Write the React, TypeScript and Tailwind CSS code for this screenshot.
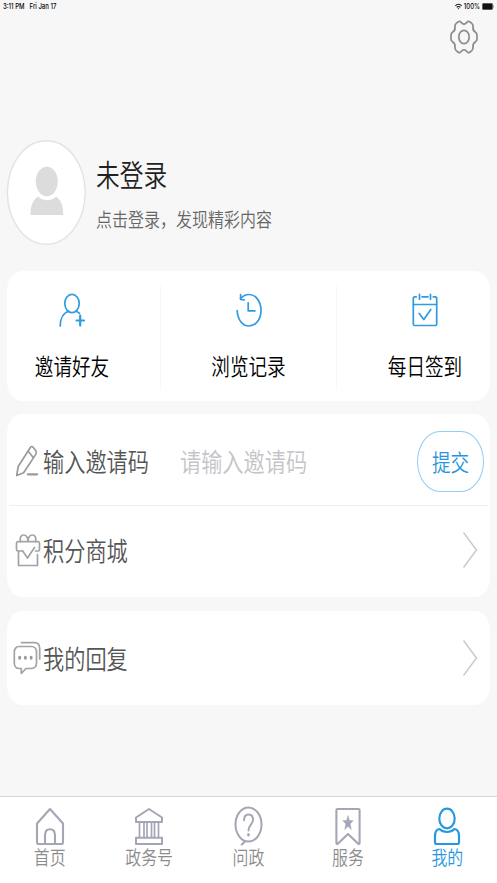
import type { ReactNode } from "react";

const tabs = [
  { id: "home", label: "首页", icon: HomeIcon, active: false },
  { id: "gov", label: "政务号", icon: GovIcon, active: false },
  { id: "ask", label: "问政", icon: AskIcon, active: false },
  { id: "service", label: "服务", icon: ServiceIcon, active: false },
  { id: "mine", label: "我的", icon: MineIcon, active: true },
];

const shortcuts = [
  { id: "invite", label: "邀请好友", icon: InviteIcon },
  { id: "history", label: "浏览记录", icon: HistoryIcon },
  { id: "checkin", label: "每日签到", icon: CheckinIcon },
];

// Tall, narrow lettering used across the whole screen
function Tall({ className = "", children }: { className?: string; children: ReactNode }) {
  return (
    <span className={`inline-block scale-y-[1.24] whitespace-nowrap leading-none ${className}`}>{children}</span>
  );
}

function GearIcon() {
  return (
    <svg className="w-[28px] h-[34px]" viewBox="0 0 28 34" fill="none" stroke="#8c8c8c" strokeWidth="1.7" strokeLinejoin="round">
      <path d="M8.3 1.800 C9.500 0.900 10.400 1.400 11.200 2.600 C12.700 4.600 15.300 4.600 16.800 2.600 C17.600 1.400 18.500 0.900 19.700 1.800 L21.800 3.400 C23 4.400 23.200 5.500 23 7 C22.700 9.500 23.300 10.800 25.200 12 C26.600 12.900 27 13.800 27 15 V19 C27 20.200 26.600 21.100 25.200 22 C23.300 23.200 22.700 24.500 23 27 C23.200 28.500 23 29.600 21.800 30.600 L19.700 32.200 C18.500 33.100 17.600 32.600 16.800 31.400 C15.300 29.400 12.700 29.400 11.200 31.400 C10.400 32.600 9.500 33.100 8.300 32.200 L6.200 30.600 C5 29.600 4.800 28.500 5 27 C5.300 24.500 4.700 23.200 2.800 22 C1.400 21.100 1 20.200 1 19 V15 C1 13.800 1.400 12.900 2.800 12 C4.700 10.800 5.300 9.500 5 7 C4.800 5.500 5 4.400 6.200 3.400 Z" />
      <ellipse cx="14" cy="17" rx="5.2" ry="6.7" />
    </svg>
  );
}

function InviteIcon() {
  return (
    <svg className="w-[28px] h-[36px]" viewBox="0 0 28 36" fill="none" stroke="#2f9be0" strokeWidth="1.7" strokeLinecap="round">
      <ellipse cx="14" cy="11.5" rx="7.2" ry="9.2" />
      <path d="M2.2 34 C2.2 26.5 5.5 20.8 10.8 19.2" />
      <path d="M17.8 19.2 C19.4 19.7 20.6 20.4 21.5 21.4" />
      <path d="M22.200 23.500 V33.500 M18.500 28.500 H26" strokeWidth="2.200" />
    </svg>
  );
}

function HistoryIcon() {
  return (
    <svg className="w-[28px] h-[36px]" viewBox="0 0 28 36" fill="none" stroke="#2f9be0" strokeWidth="1.700" strokeLinecap="round" strokeLinejoin="round">
      <path d="M2.200 18.500 C2.400 27 7.200 34 14 34 C20.800 34 26 27.200 26 18.500 C26 9.500 20.800 2.500 14 2.500 C10.500 2.500 7.800 4 5.400 6.700" />
      <path d="M5.600 2.700 V7.300 L9.300 8" />
      <path d="M13.200 10.800 V18.800 H20" />
    </svg>
  );
}

function CheckinIcon() {
  return (
    <svg className="w-[28px] h-[36px]" viewBox="0 0 28 36" fill="none" stroke="#2f9be0" strokeWidth="1.700" strokeLinecap="round" strokeLinejoin="round">
      <path d="M5.300 4.800 H3.600 C2.800 4.800 2.300 5.500 2.300 6.400 V31.800 C2.300 32.900 2.800 33.500 3.600 33.500 H24.400 C25.200 33.500 25.700 32.900 25.700 31.800 V6.400 C25.700 5.500 25.200 4.800 24.400 4.800 H22.300" />
      <path d="M11 4.800 H17 M8.500 2.300 V7.200 M19.500 2.300 V7.200 M2.500 12.500 H25.500" />
      <path d="M8.200 21.500 L12.800 27.500 L19.800 17.500" />
    </svg>
  );
}

function PencilIcon() {
  return (
    <svg className="w-[24px] h-[32px]" viewBox="0 0 24 32" fill="none" stroke="#9a9a9a" strokeWidth="1.700" strokeLinecap="round" strokeLinejoin="round">
      <path d="M1.700 30.500 L3.200 21.500 L15.500 2.300 C16.300 1.200 17.300 1.200 18.200 2.300 L20.800 5.700 C21.700 6.800 21.700 7.900 20.900 9.100 L8.600 27.700 Z" />
      <path d="M13.300 6.200 L18.200 12.500" />
      <path d="M13 29.300 H22" strokeWidth="2.300" />
    </svg>
  );
}

function GiftIcon() {
  return (
    <svg className="w-[26px] h-[34px]" viewBox="0 0 26 34" fill="none" stroke="#a3a3a3" strokeWidth="1.700" strokeLinecap="round" strokeLinejoin="round">
      <path d="M5.500 8.500 C4.500 5 6 2 8.500 2 C11 2 12.800 4.500 13 8.500 C13.200 4.500 15 2 17.500 2 C20 2 21.500 5 20.500 8.500" />
      <path d="M6.500 18 H3 C2 18 1.500 17.500 1.500 16.500 V10.300 C1.500 9.200 2 8.600 3 8.600 H23 C24 8.600 24.500 9.200 24.500 10.300 V16.500 C24.500 17.500 24 18 23 18 H20.500" />
      <path d="M3.500 18.500 V32.500 H22.500 V21.500" />
      <path d="M7.500 17.800 L12.500 25 L19.500 14.500" />
    </svg>
  );
}

function ReplyIcon() {
  return (
    <svg className="w-[28px] h-[34px]" viewBox="0 0 28 34" fill="none" stroke="#a3a3a3" strokeWidth="1.700" strokeLinecap="round" strokeLinejoin="round">
      <path d="M6 5.500 H18.500 C21.500 5.500 23.500 7.900 23.500 11 V22 C23.500 25.200 21.500 27.500 18.500 27.500 H13 L8.300 32.500 V27.500 H6 C3.200 27.500 1.300 25.200 1.300 22 V11 C1.300 7.900 3.200 5.500 6 5.500 Z" />
      <path d="M8.500 1.700 H21.500 C24.800 1.700 26.700 4.100 26.700 7.500 V18" />
      <g fill="#999" stroke="none">
        <ellipse cx="6.700" cy="16.800" rx="1.500" ry="2" />
        <ellipse cx="12.400" cy="16.800" rx="1.500" ry="2" />
        <ellipse cx="18.100" cy="16.800" rx="1.500" ry="2" />
      </g>
    </svg>
  );
}

function ChevronIcon() {
  return (
    <svg className="w-[16px] h-[38px]" viewBox="0 0 16 38" fill="none" stroke="#c9c9c9" strokeWidth="1.400">
      <path d="M1.500 1.500 L14.500 19 L1.500 36.500" />
    </svg>
  );
}

function HomeIcon() {
  return (
    <svg className="w-[32px] h-[42px]" viewBox="0 0 32 42" fill="none" stroke="#a4a6b6" strokeWidth="2.100" strokeLinejoin="round">
      <path d="M16 4 L29 18.500 V37.500 C29 38.500 28.500 39 27.700 39 H4.300 C3.500 39 3 38.500 3 37.500 V18.500 Z" />
      <path d="M11 39 V30.500 C11 26.600 13 24.300 16 24.300 C19 24.300 21 26.600 21 30.500 V39" />
    </svg>
  );
}

function GovIcon() {
  return (
    <svg className="w-[32px] h-[42px]" viewBox="0 0 32 42" fill="none" stroke="#a4a6b6" strokeWidth="2" strokeLinejoin="round">
      <path d="M16 4 L29 12.500 V17 H3 V12.500 Z" />
      <path d="M3 32.800 H29 V39 H3 Z" />
      <path d="M6.500 17 V32.500 M11 17 V32.500 M14 17 V32.500 M18.500 17 V32.500 M21.500 17 V32.500 M25.500 17 V32.500" strokeWidth="1.700" />
    </svg>
  );
}

function AskIcon() {
  return (
    <svg className="w-[32px] h-[42px]" viewBox="0 0 32 42" fill="none" stroke="#a4a6b6" strokeWidth="2" strokeLinecap="round" strokeLinejoin="round">
      <ellipse cx="16.500" cy="19.500" rx="13" ry="17" />
      <path d="M9.800 39.500 L13 36.500" strokeWidth="2.200" />
      <path d="M12 15.300 C12 11.500 13.800 9.500 16.500 9.500 C19.300 9.500 21 11.700 21 14.700 C21 19.500 16.500 20 16.500 25.500" />
      <ellipse cx="16.500" cy="29.700" rx="1.400" ry="1.700" fill="#a4a6b6" stroke="none" />
    </svg>
  );
}

function ServiceIcon() {
  return (
    <svg className="w-[32px] h-[42px]" viewBox="0 0 32 42" fill="none" stroke="#a4a6b6" strokeWidth="2.100" strokeLinejoin="round">
      <path d="M5.500 4 H26.500 C27.200 4 27.600 4.400 27.600 5.200 V37.500 C27.600 39 26.800 39.400 26 38.500 L16 29 L6 38.500 C5.200 39.400 4.400 39 4.400 37.500 V5.200 C4.400 4.400 4.800 4 5.500 4 Z" />
      <path d="M16 10.500 L17.400 15.500 H21.200 L18.200 18.900 L19.300 24.500 L16 21.300 L12.700 24.500 L13.800 18.900 L10.800 15.500 H14.600 Z" fill="#a4a6b6" strokeWidth="0.500" />
    </svg>
  );
}

function MineIcon() {
  return (
    <svg className="w-[32px] h-[42px]" viewBox="0 0 32 42" fill="none" stroke="#2798e0" strokeWidth="2.200" strokeLinejoin="round">
      <ellipse cx="16" cy="13.500" rx="7.700" ry="9.800" />
      <path d="M8.500 24 C12.500 28 19.500 28 23.500 24 C26.500 24.500 28 27 28 31 V37 C28 38.300 27.400 39 26.500 39 H5.500 C4.600 39 4 38.300 4 37 V31 C4 27 5.500 24.500 8.500 24 Z" />
    </svg>
  );
}

export default function ProfilePage() {
  return (
    <div className="flex h-[883px] w-[497px] flex-col overflow-hidden bg-[#f7f7f7] font-['Noto_Sans_CJK_SC',sans-serif] font-[350]">
      {/* Status bar */}
      <div className="flex h-[13px] items-center justify-between pl-[3px] pr-[3px] font-['Inter',sans-serif] text-[6px] font-medium text-black">
        <div className="flex gap-[5px]">
          <Tall>3:11 PM</Tall>
          <Tall>Fri Jan 17</Tall>
        </div>
        <div className="flex items-center gap-[2px]">
          <svg className="h-[7px] w-[7px]" viewBox="0 0 7 7" fill="none" stroke="#111" strokeWidth="1.100">
            <path d="M0.400 2.800 C2 0.800 5 0.800 6.600 2.800 M1.700 4.400 C2.700 3.200 4.300 3.200 5.300 4.400" />
            <path d="M2.600 5.300 L3.500 6.500 L4.400 5.300 Z" fill="#111" stroke="none" />
          </svg>
          <Tall>100%</Tall>
          <svg className="h-[7px] w-[12px]" viewBox="0 0 12 7">
            <rect x="0.300" y="0.300" width="10.400" height="6.400" rx="1.300" fill="#111" stroke="#777" strokeWidth="0.500" />
            <path d="M11.500 2.500 V4.500" stroke="#777" strokeWidth="0.700" />
          </svg>
        </div>
      </div>

      <div className="flex h-[127px] justify-end pr-[19px] pt-[7px]">
        <GearIcon />
      </div>

      {/* User */}
      <div className="flex h-[105px] items-center pl-[6px]">
        <svg className="h-[105px] w-[80px]" viewBox="0 0 80 105">
          <ellipse cx="40.300" cy="52.500" rx="38.900" ry="51.700" fill="#fff" stroke="#e2e2e2" strokeWidth="1.400" />
          <ellipse cx="40.800" cy="41.500" rx="11" ry="14.800" fill="#dcdcdc" />
          <path d="M32 56.500 C37 61.500 45 61.500 50 56.500 C54.500 59.500 57.300 65 57.300 75 H24.500 C24.500 65 27.500 59.500 32 56.500 Z" fill="#dcdcdc" />
        </svg>
        <div className="flex flex-col items-start gap-[24px] pl-[10px] pt-[4px]">
          <Tall className="text-[23.7px] text-[#222]">未登录</Tall>
          <Tall className="text-[16px] text-[#666]">点击登录，发现精彩内容</Tall>
        </div>
      </div>

      {/* Shortcuts */}
      <div className="mx-[7px] mt-[26px] grid h-[130px] grid-cols-[153px_1fr_153px] rounded-[15px/20px] bg-white">
        {shortcuts.map((item, index) => (
          <div key={item.id} className={`relative flex flex-col items-center pt-[21px] ${index === 0 ? "pr-[23px]" : ""} ${index === 2 ? "pl-[23px]" : ""}`}>
            <item.icon />
            <Tall className="mt-[28px] text-[18.600px] text-black">{item.label}</Tall>
            {index === 1 && <div className="absolute inset-x-0 bottom-[12px] top-[14px] border-x border-[#f8f8f8]" />}
          </div>
        ))}
      </div>

      {/* Invite code and points mall */}
      <div className="mx-[7px] mt-[13px] h-[183px] rounded-[15px/20px] bg-white">
        <div className="mx-[2px] flex h-[92px] items-center border-b border-[#efefef] pl-[6px] pr-[4px] pt-[3px]">
          <PencilIcon />
          <Tall className="ml-[4px] text-[21.200px] text-[#555]">输入邀请码</Tall>
          <Tall className="ml-[31px] text-[21.200px] text-[#c4c4c9]">请输入邀请码</Tall>
          <button className="ml-auto flex h-[61px] w-[67px] items-center justify-center rounded-[23px/30.500px] border border-[#8fcdf2] text-[18.600px] text-[#2594dc]">
            <Tall>提交</Tall>
          </button>
        </div>
        <div className="flex h-[88px] items-center pl-[8px] pr-[12px]">
          <GiftIcon />
          <Tall className="ml-[2px] text-[21.200px] text-[#555]">积分商城</Tall>
          <div className="ml-auto">
            <ChevronIcon />
          </div>
        </div>
      </div>

      {/* Replies */}
      <div className="mx-[7px] mt-[14px] flex h-[94px] items-center rounded-[15px/20px] bg-white pl-[6px] pr-[12px]">
        <ReplyIcon />
        <Tall className="ml-[2px] text-[21.200px] text-[#555]">我的回复</Tall>
        <div className="ml-auto">
          <ChevronIcon />
        </div>
      </div>

      {/* Tab bar */}
      <nav className="mt-auto grid h-[87px] grid-cols-5 border-t border-[#d6d6d6] bg-white">
        {tabs.map((tab) => (
          <div key={tab.id} className={`flex flex-col items-center pt-[8px] ${tab.active ? "text-[#2798e0]" : "text-[#8c8c8c]"}`}>
            <tab.icon />
            <Tall className="mt-[3px] text-[15.900px]">{tab.label}</Tall>
          </div>
        ))}
      </nav>
    </div>
  );
}
